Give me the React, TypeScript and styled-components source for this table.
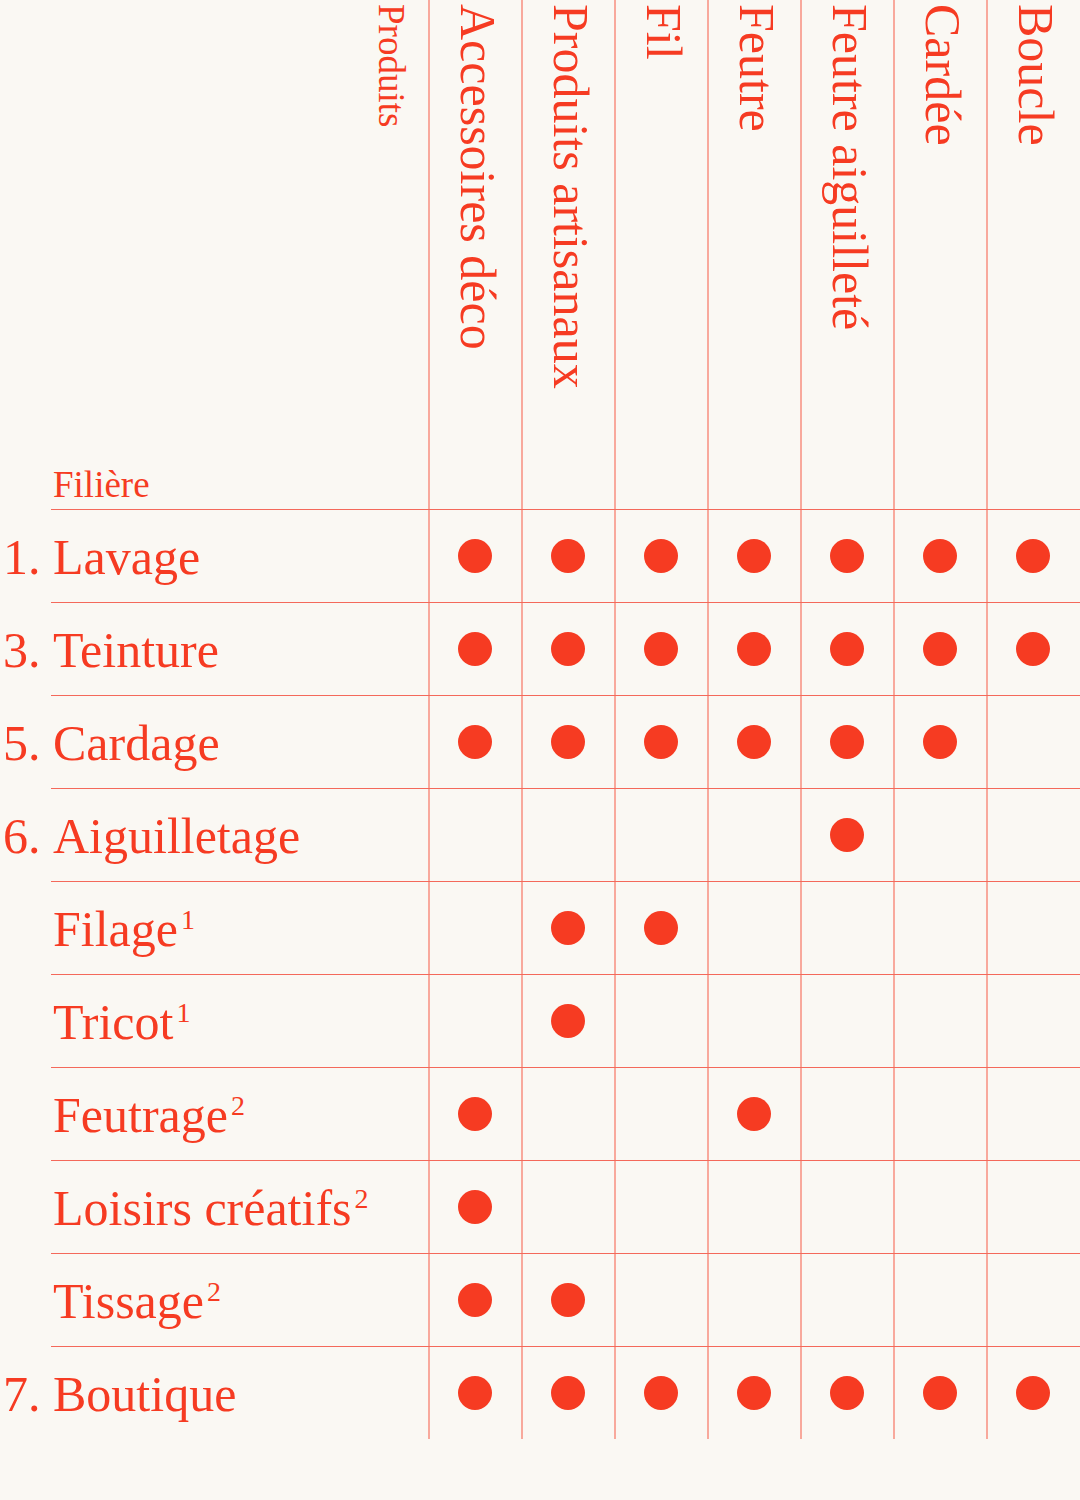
import styled, { createGlobalStyle } from "styled-components"

const RED = "#f63b22"
const H_LINE = "#f4695a"
const V_LINE = "#f8a99c"

const GlobalStyle = createGlobalStyle`
   html, body {
      margin: 0;
      padding: 0;
      background: #faf8f3;
   }
   body {
      font-family: "Liberation Serif", "Times New Roman", serif;
      color: ${RED};
   }
`

const StyledTable = styled.div`
   width: 1080px;
   padding-bottom: 60px;
`

const StyledRow = styled.div`
   display: flex;
`

const StyledNum = styled.div`
   width: 51px;
   flex: none;
   box-sizing: border-box;
   font-size: 50px;
   line-height: 89px;
   padding-top: 3px;
   padding-left: 3px;
   white-space: nowrap;
`

const StyledLine = styled.div<{ $last?: boolean }>`
   flex: 1;
   display: flex;
   border-bottom: ${(p) => (p.$last ? "none" : `1px solid ${H_LINE}`)};
`

const StyledLabel = styled.div`
   width: 377px;
   flex: none;
   box-sizing: border-box;
   font-size: 50px;
   line-height: 89px;
   padding-top: 3px;
   padding-left: 2px;
   white-space: nowrap;
`

const StyledSup = styled.span`
   display: inline-block;
   font-size: 28px;
   line-height: 0;
   vertical-align: 17px;
   margin-left: 3px;
`

const StyledHeadLabel = styled.div`
   width: 377px;
   height: 509px;
   flex: none;
   display: flex;
   flex-direction: column;
   align-items: flex-end;
`

const StyledVertical = styled.span<{ $size: number }>`
   writing-mode: vertical-rl;
   text-orientation: mixed;
   font-size: ${(p) => p.$size}px;
   line-height: 1;
   white-space: nowrap;
`

const StyledSmallVertical = styled(StyledVertical)`
   margin-top: 4px;
   margin-right: 18px;
`

const StyledFiliere = styled.span`
   align-self: flex-start;
   margin-top: auto;
   padding-left: 2px;
   padding-bottom: 6px;
   font-size: 37px;
   line-height: 1;
`

const StyledHeadCell = styled.div`
   width: 93px;
   flex: none;
   box-sizing: border-box;
   border-left: 2px solid ${V_LINE};
   display: flex;
   justify-content: center;
   padding-top: 4px;
   padding-left: 4px;
`

const StyledCell = styled.div`
   width: 93px;
   flex: none;
   box-sizing: border-box;
   border-left: 2px solid ${V_LINE};
   display: flex;
   align-items: center;
   justify-content: center;
   padding-right: 1px;
`

const StyledDot = styled.span`
   width: 34px;
   height: 34px;
   border-radius: 50%;
   background: ${RED};
`

const products = [
   "Accessoires déco",
   "Produits artisanaux",
   "Fil",
   "Feutre",
   "Feutre aiguilleté",
   "Cardée",
   "Boucle",
]

type TRow = {
   num?: string
   label: string
   note?: string
   marks: number[]
}

const rows: TRow[] = [
   { num: "1.", label: "Lavage", marks: [1, 1, 1, 1, 1, 1, 1] },
   { num: "3.", label: "Teinture", marks: [1, 1, 1, 1, 1, 1, 1] },
   { num: "5.", label: "Cardage", marks: [1, 1, 1, 1, 1, 1, 0] },
   { num: "6.", label: "Aiguilletage", marks: [0, 0, 0, 0, 1, 0, 0] },
   { label: "Filage", note: "1", marks: [0, 1, 1, 0, 0, 0, 0] },
   { label: "Tricot", note: "1", marks: [0, 1, 0, 0, 0, 0, 0] },
   { label: "Feutrage", note: "2", marks: [1, 0, 0, 1, 0, 0, 0] },
   { label: "Loisirs créatifs", note: "2", marks: [1, 0, 0, 0, 0, 0, 0] },
   { label: "Tissage", note: "2", marks: [1, 1, 0, 0, 0, 0, 0] },
   { num: "7.", label: "Boutique", marks: [1, 1, 1, 1, 1, 1, 1] },
]

const App: React.FC = () => {
   return (
      <>
         <GlobalStyle />
         <StyledTable>
            <StyledRow>
               <StyledNum />
               <StyledLine>
                  <StyledHeadLabel>
                     <StyledSmallVertical $size={37}>Produits</StyledSmallVertical>
                     <StyledFiliere>Filière</StyledFiliere>
                  </StyledHeadLabel>
                  {products.map((p) => (
                     <StyledHeadCell key={p}>
                        <StyledVertical $size={50}>{p}</StyledVertical>
                     </StyledHeadCell>
                  ))}
               </StyledLine>
            </StyledRow>
            {rows.map((row, i) => (
               <StyledRow key={row.label}>
                  <StyledNum>{row.num}</StyledNum>
                  <StyledLine $last={i === rows.length - 1}>
                     <StyledLabel>
                        {row.label}
                        {row.note && <StyledSup>{row.note}</StyledSup>}
                     </StyledLabel>
                     {row.marks.map((m, j) => (
                        <StyledCell key={j}>{m ? <StyledDot /> : null}</StyledCell>
                     ))}
                  </StyledLine>
               </StyledRow>
            ))}
         </StyledTable>
      </>
   )
}

export default App
